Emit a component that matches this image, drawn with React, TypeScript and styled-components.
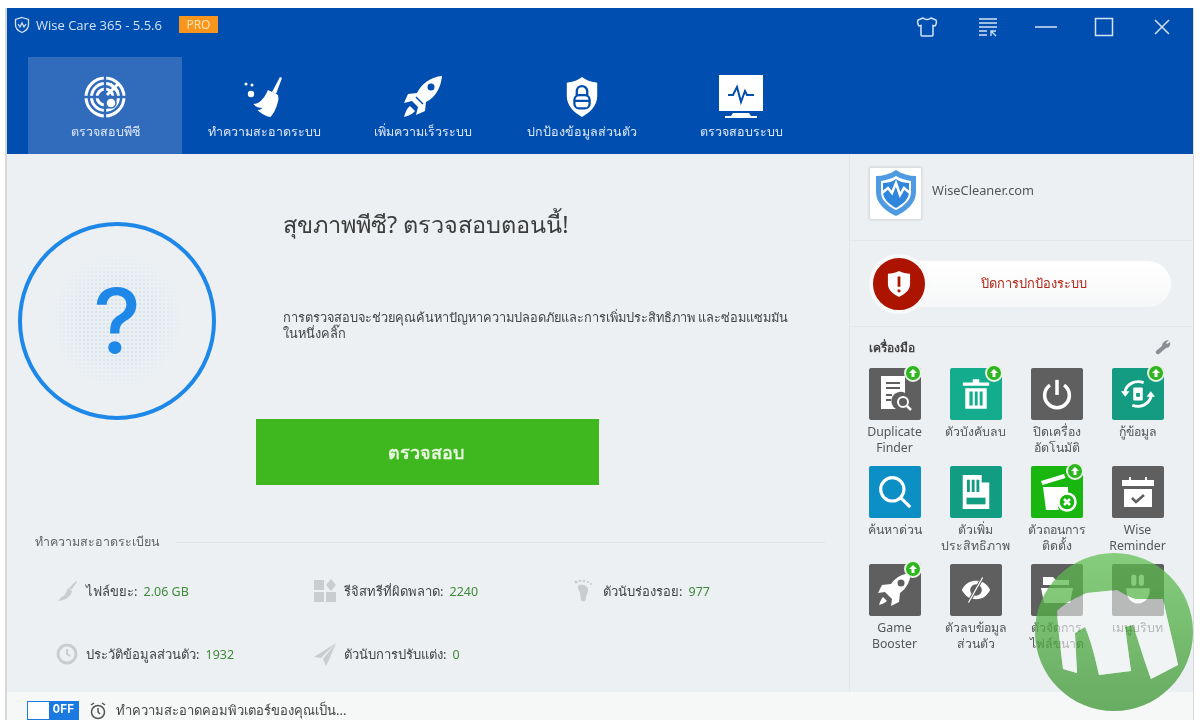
import React from 'react';
import styled, { createGlobalStyle } from 'styled-components';

const GlobalStyle = createGlobalStyle`
  html, body {
    margin: 0;
    padding: 0;
    height: 720px;
    overflow: hidden;
    background: #fff;
    font-family: 'Noto Sans', 'Liberation Sans', 'DejaVu Sans', sans-serif;
  }
  * { box-sizing: border-box; }
`;

const S = {
  Window: styled.div`
    position: relative;
    margin: 8px 6px 0 5px;
    height: 712px;
    display: flex;
    flex-direction: column;
    overflow: hidden;
    border-left: 2px solid #d6d8da;
    border-right: 1px solid #d6d8da;
    filter: blur(0.5px);
  `,
  Header: styled.header`
    height: 146px;
    flex: none;
    background: #004eb0;
    display: flex;
    flex-direction: column;
  `,
  TitleBar: styled.div`
    height: 49px;
    flex: none;
    display: flex;
    align-items: flex-start;
    padding: 8px 16px 0 6px;
  `,
  AppIcon: styled.span`
    display: flex;
    color: #d5e3f5;
  `,
  TitleText: styled.span`
    margin-left: 5px;
    font-size: 13px;
    line-height: 19px;
    color: #d5e3f5;
    font-family: 'Open Sans', 'Noto Sans', sans-serif;
  `,
  Pro: styled.span`
    margin-left: 17px;
    width: 39px;
    height: 17px;
    background: #f7951d;
    color: #ffe2b0;
    font-size: 12px;
    line-height: 17px;
    text-align: center;
  `,
  WindowButtons: styled.div`
    margin-left: auto;
    display: flex;
    gap: 28px;
  `,
  WindowButton: styled.span`
    width: 30px;
    height: 22px;
    display: flex;
    align-items: center;
    justify-content: center;
    color: #d5e3f5;
  `,
  Nav: styled.nav`
    display: flex;
    gap: 5px;
    padding-left: 21px;
    flex: 1;
  `,
  Tab: styled.div<{ $active?: boolean }>`
    width: 154px;
    display: flex;
    flex-direction: column;
    align-items: center;
    padding-top: 18px;
    background: ${p => (p.$active ? '#316cbc' : 'transparent')};
  `,
  TabIcon: styled.div`
    height: 44px;
    display: flex;
    align-items: center;
    justify-content: center;
    color: #fff;
  `,
  TabLabel: styled.span`
    margin-top: 5px;
    font-size: 12.5px;
    line-height: 16px;
    color: #dce6f5;
    white-space: nowrap;
  `,
  Body: styled.div`
    height: 538px;
    flex: none;
    display: flex;
    background: #ecf0f3;
  `,
  Main: styled.main`
    width: 842px;
    flex: none;
    padding: 54px 0 0 11px;
  `,
  Hero: styled.section`
    display: flex;
    align-items: flex-start;
  `,
  Gauge: styled.div`
    position: relative;
    width: 198px;
    height: 198px;
    margin-top: 14px;
    flex: none;
    border: 4px solid #1e88e8;
    border-radius: 50%;
    display: flex;
    align-items: center;
    justify-content: center;
    &::before {
      content: '';
      position: absolute;
      inset: 28px;
      border-radius: 50%;
      background-image: radial-gradient(circle, #d5e2f1 1.2px, transparent 1.6px);
      background-size: 4px 4px;
      -webkit-mask-image: radial-gradient(circle, #000 35%, transparent 70%);
      mask-image: radial-gradient(circle, #000 35%, transparent 70%);
    }
  `,
  QuestionMark: styled.span`
    position: relative;
    font-family: 'Inter', 'Liberation Sans', sans-serif;
    font-weight: 500;
    font-size: 90px;
    line-height: 90px;
    color: #1e88e8;
  `,
  HeroText: styled.div`
    margin-left: 40px;
    display: flex;
    flex-direction: column;
  `,
  Heading: styled.h1`
    margin: 0 0 0 27px;
    height: 32px;
    font-size: 23.5px;
    line-height: 32px;
    font-weight: 400;
    color: #3c3c3c;
    white-space: nowrap;
  `,
  Description: styled.p`
    margin: 69px 0 0 27px;
    font-size: 12.8px;
    line-height: 16px;
    color: #444;
    white-space: nowrap;
  `,
  ScanButton: styled.button`
    margin-top: 78px;
    width: 343px;
    height: 66px;
    border: 0;
    padding: 0 4px 0 0;
    background: #3fb71e;
    color: #e8f7df;
    font-family: inherit;
    font-size: 18px;
    font-weight: 700;
  `,
  SectionHead: styled.div`
    margin: 49px 24px 0 17px;
    display: flex;
    align-items: center;
    gap: 16px;
    font-size: 12.5px;
    line-height: 16px;
    color: #666;
    &::after {
      content: '';
      flex: 1;
      height: 1px;
      background: #e0e4e8;
    }
  `,
  Stats: styled.div`
    margin: 29px 0 0 35px;
    display: grid;
    grid-template-columns: 258px 259px 200px;
    row-gap: 39px;
  `,
  Stat: styled.div`
    height: 24px;
    display: flex;
    align-items: center;
    gap: 6px;
    font-size: 13px;
    color: #444;
    white-space: nowrap;
  `,
  StatIcon: styled.span`
    width: 27px;
    height: 24px;
    display: flex;
    align-items: center;
    justify-content: center;
    color: #c9cdd0;
  `,
  StatValue: styled.span`
    font-size: 12.5px;
    color: #3f8a3a;
  `,
  Side: styled.aside`
    flex: 1;
    border-left: 1px solid #e3e6e9;
    display: flex;
    flex-direction: column;
  `,
  LogoRow: styled.div`
    height: 87px;
    flex: none;
    display: flex;
    align-items: center;
    gap: 10px;
    padding: 0 0 8px 19px;
    border-bottom: 1px solid #e5e8eb;
    font-size: 12.8px;
    color: #555;
  `,
  LogoText: styled.span`
    margin-bottom: 6px;
  `,
  LogoBox: styled.div`
    width: 53px;
    height: 53px;
    background: #fff;
    border: 1px solid #dcdfe2;
    border-radius: 2px;
    box-shadow: 0 0 2px rgba(0, 0, 0, 0.2);
    display: flex;
    align-items: center;
    justify-content: center;
  `,
  ProtectRow: styled.div`
    height: 86px;
    flex: none;
    display: flex;
    align-items: center;
    padding: 0 22px;
    border-bottom: 1px solid #e5e8eb;
  `,
  ProtectPill: styled.div`
    position: relative;
    flex: 1;
    height: 46px;
    padding-left: 24px;
    border-radius: 23px;
    background: linear-gradient(#fff, #f6f7f8);
    display: flex;
    align-items: center;
    justify-content: center;
    font-size: 12.8px;
    color: #b3261a;
  `,
  ProtectBadge: styled.span`
    position: absolute;
    left: -3px;
    top: -7px;
    width: 60px;
    height: 60px;
    border-radius: 50%;
    border: 4px solid #f8f9fa;
    background: #ad1400;
    display: flex;
    align-items: center;
    justify-content: center;
  `,
  ToolHead: styled.div`
    height: 41px;
    flex: none;
    padding: 12px 22px 0 19px;
    display: flex;
    align-items: flex-start;
    justify-content: space-between;
    font-size: 12px;
    font-weight: 700;
    line-height: 18px;
    color: #444;
  `,
  ToolGrid: styled.div`
    display: grid;
    grid-template-columns: repeat(4, 81px);
    grid-auto-rows: 98px;
    padding-left: 4px;
  `,
  Tool: styled.div`
    display: flex;
    flex-direction: column;
    align-items: center;
  `,
  ToolTile: styled.div<{ $color: string }>`
    position: relative;
    width: 52px;
    height: 52px;
    flex: none;
    border-radius: 2px;
    background: ${p => p.$color};
    display: flex;
    align-items: center;
    justify-content: center;
  `,
  UpBadge: styled.span`
    position: absolute;
    top: -4px;
    right: -1px;
    width: 18px;
    height: 18px;
    border-radius: 50%;
    border: 2px solid #e8f3e6;
    background: #2fb520;
    display: flex;
    align-items: center;
    justify-content: center;
  `,
  ToolLabel: styled.span`
    margin-top: 4px;
    font-size: 12.3px;
    line-height: 16px;
    text-align: center;
    color: #555;
    white-space: pre-line;
  `,
  Footer: styled.footer`
    height: 28px;
    flex: none;
    background: #f6f7f7;
    display: flex;
    align-items: flex-start;
    padding: 9px 0 0 20px;
    font-size: 13px;
    line-height: 19px;
    color: #444;
  `,
  Toggle: styled.div`
    width: 52px;
    height: 19px;
    display: flex;
    border: 1px solid #1a7ae0;
    background: #fff;
  `,
  ToggleOff: styled.span`
    margin-left: auto;
    width: 29px;
    background: #1a7ae0;
    color: #fff;
    font-family: 'Liberation Mono', monospace;
    font-size: 12px;
    font-weight: 700;
    line-height: 17px;
    text-align: center;
  `,
  Alarm: styled.span`
    margin: 0 7px 0 8px;
    width: 22px;
    display: flex;
    justify-content: center;
    color: #555;
  `,
  Watermark: styled.svg`
    position: absolute;
    left: 1028px;
    top: 545px;
    width: 158px;
    height: 158px;
    pointer-events: none;
  `,
};

const Line = { stroke: 'currentColor', fill: 'none' } as const;
const Blue = '#004eb0';

// the slanted M cut out of the watermark disc
const markShape = 'M22 58C30 50 42 44 52 40L82 37C88 40 94 44 100 46L128 46C133 70 140 96 143 112L116 126C110 110 104 90 98 72L90 74 96 118 64 122C60 104 56 88 50 74L40 80 42 120 28 116C26 98 23 76 22 58Z';

const Shield = () => (
  <svg width="18" height="18" viewBox="0 0 18 18" {...Line} strokeWidth="1.3">
    <path d="M9 1.500 15.500 3.500V9c0 3.600-3 6-6.500 7.500C5.500 15 2.500 12.600 2.500 9V3.500Z" />
    <path d="M5 8l2 3 2-4 2 4 2-3" />
  </svg>
);

const Radar = () => (
  <svg width="44" height="44" viewBox="0 0 44 44">
    <circle cx="22" cy="22" r="19" fill="none" stroke="#fff" strokeWidth="3" />
    <circle cx="22" cy="22" r="13.500" fill="none" stroke="#fff" strokeWidth="3" />
    <circle cx="22" cy="22" r="8" fill="none" stroke="#fff" strokeWidth="3" />
    <path d="M22 1v42M1 22h42" stroke="#316cbc" strokeWidth="2.400" />
    <path d="M24 20 36 8M27 9l8 8" stroke="#fff" strokeWidth="3" />
    <circle cx="28" cy="28" r="5" fill="#fff" stroke="#316cbc" strokeWidth="1.500" />
  </svg>
);

const Broom = () => (
  <svg width="44" height="44" viewBox="0 0 44 44" fill="#fff">
    <path d="M38 2l2 1-6 16-4-2Z" />
    <path d="M26 15l10 5 .5 4c-1 6-4 14-8 18-3 0-9-3-13-7 3 0 5-2 5-2-3 0-7-1-9-4 5 0 10-4 14.500-14Z" />
    <circle cx="4" cy="9" r="1.500" />
    <circle cx="10" cy="10" r="1.500" />
    <circle cx="9" cy="19" r="3.200" />
  </svg>
);

const Rocket = () => (
  <svg width="44" height="44" viewBox="0 0 44 44" fill="#fff">
    <path d="M41 1C30 2 21 8 16 18l-9 1-4 9 8-2 6 6-2 8 9-4 1-9c10-5 15-15 16-26Z" />
    <circle cx="30" cy="12" r="3.500" fill={Blue} />
    <path d="M9 31c-3 2-5 7-6 11 4-1 9-3 11-6Z" />
    <path d="M15 22l7 7" stroke={Blue} strokeWidth="1.500" />
  </svg>
);

const Lock = () => (
  <svg width="38" height="42" viewBox="0 0 40 44">
    <path d="M20 1c5 4 10 5 16 6v14c0 10-7 17-16 22C11 38 4 31 4 21V7c6-1 11-2 16-6Z" fill="#fff" />
    <rect x="12" y="20" width="16" height="14" rx="5" fill="none" stroke={Blue} strokeWidth="2.400" />
    <path d="M14.500 20v-4a5.500 5.500 0 0 1 11 0v4M12 26h16" fill="none" stroke={Blue} strokeWidth="2.400" />
  </svg>
);

const Monitor = () => (
  <svg width="46" height="44" viewBox="0 0 46 44">
    <rect x="1" y="0" width="44" height="36" fill="#fff" />
    <path d="M10 20h5l4-8 4 15 4-11 2 4h7" fill="none" stroke={Blue} strokeWidth="2" />
    <path d="M15 38h16l2 3H39v2H7v-2h6Z" fill="#fff" />
  </svg>
);

const Shirt = () => (
  <svg width="22" height="22" viewBox="0 0 22 22" {...Line} strokeWidth="1.500" transform="translate(-3 0)">
    <path d="M7 2c2 2 6 2 8 0l5 2c1 2 0 5-1 6l-2-.5V19c0 1-1 1-1 1H6s-1 0-1-1V9.500L3 10C2 9 1 6 2 4Z" />
  </svg>
);

const ListBack = () => (
  <svg width="20" height="20" viewBox="0 0 20 20" {...Line} strokeWidth="1.500">
    <path d="M1 2h18M1 6h18M1 10h18M1 14h8M1 18h8" />
    <path d="M13 19v-5h5M13 14l5 5" strokeWidth="1.300" />
  </svg>
);

const Minimize = () => (
  <svg width="22" height="22" viewBox="0 0 22 22" {...Line} strokeWidth="1.500">
    <path d="M0 11h22" />
  </svg>
);

const Maximize = () => (
  <svg width="20" height="20" viewBox="0 0 20 20" {...Line} strokeWidth="1.500">
    <rect x="1.500" y="1.500" width="17" height="17" />
  </svg>
);

const Close = () => (
  <svg width="18" height="18" viewBox="0 0 18 18" {...Line} strokeWidth="1.500">
    <path d="M2 2l14 14M16 2 2 16" />
  </svg>
);

const Arrow = () => (
  <svg width="10" height="10" viewBox="0 0 10 10" fill="#fff">
    <path d="M5 1 9 5H6.500v4h-3V5H1Z" />
  </svg>
);

const tiles: Record<string, React.ReactNode> = {
  duplicate: (
    <svg width="52" height="52" viewBox="0 0 52 52">
      <path d="M12 8h24v17a9 9 0 0 0-9 16H12Z" fill="#fff" />
      <path d="M17 15h14M17 20h14M17 27h6M17 32h5" stroke="#5f5f5f" strokeWidth="2" />
      <circle cx="34" cy="34" r="5" fill="none" stroke="#fff" strokeWidth="2" />
      <path d="M38 38l4 4" stroke="#fff" strokeWidth="2.500" />
    </svg>
  ),
  trash: (
    <svg width="28" height="32" viewBox="0 0 34 38" fill="#fff">
      <path d="M13 1h8v4h12v4H1V5h12Z" />
      <path d="M4 12h26v25H4Zm5 4v17h4V16Zm6.500 0v17h3.500V16Zm6 0v17h3.500V16Z" fillRule="evenodd" />
    </svg>
  ),
  power: (
    <svg width="30" height="32" viewBox="0 0 34 36" fill="none" stroke="#fff" strokeWidth="4">
      <path d="M17 2v17" />
      <path d="M9 8a14 14 0 1 0 16 0" />
    </svg>
  ),
  recover: (
    <svg width="36" height="34" viewBox="0 0 38 36" fill="none" stroke="#fff" strokeWidth="3">
      <path d="M5 16C7 7 16 3 25 6M33 20c-2 9-11 13-20 10" />
      <path d="M1 15h9l-4.500 6ZM37 21h-9l4.500-6Z" fill="#fff" stroke="none" />
      <rect x="14" y="11" width="10" height="14" rx="1" fill="#fff" stroke="none" />
      <rect x="17" y="17" width="4" height="4" fill="#139c82" stroke="none" />
    </svg>
  ),
  search: (
    <svg width="34" height="34" viewBox="0 0 38 38" fill="none" stroke="#fff">
      <circle cx="16" cy="16" r="13" strokeWidth="3.500" />
      <path d="M25 25l11 11" strokeWidth="3.500" />
    </svg>
  ),
  card: (
    <svg width="30" height="36" viewBox="0 0 30 38">
      <path d="M1 1h20v8l8 0v28H1Z" fill="#fff" />
      <path d="M7 6v13M12 6v13M17 6v13" stroke="#129c82" strokeWidth="3" />
      <rect x="5" y="25" width="20" height="7" fill="#129c82" />
    </svg>
  ),
  uninstall: (
    <svg width="42" height="42" viewBox="0 0 42 42">
      <path d="M5 10 28 3l1.500 4-23 7Z" fill="#fff" />
      <path d="M7 16h25v7a11 11 0 0 0-9 16H10Z" fill="#fff" />
      <circle cx="31" cy="31" r="8.500" fill="none" stroke="#fff" strokeWidth="2.500" />
      <path d="M28 28l6 6m0-6-6 6" stroke="#fff" strokeWidth="2.500" />
    </svg>
  ),
  reminder: (
    <svg width="34" height="34" viewBox="0 0 34 34">
      <path d="M1 5h7V2h2v3h14V2h2v3h7v6H1Z" fill="#fff" />
      <path d="M3 14h28v18H3Z" fill="#fff" />
      <path d="M11 23l4 4 8-7" fill="none" stroke="#5f5f5f" strokeWidth="2.500" />
    </svg>
  ),
  game: (
    <svg width="38" height="38" viewBox="0 0 38 38" fill="#fff">
      <path d="M35 2c-9 1-15 4-20 11l-9 1-4 8 7-1 7 7-1 7 8-4 1-9c7-5 10-12 11-20Z" />
      <circle cx="25" cy="12" r="3.500" fill="#5f5f5f" />
      <path d="M7 26c-2 2-3 5-4 8 3-1 6-2 8-4Z" />
    </svg>
  ),
  eye: (
    <svg width="30" height="30" viewBox="0 0 36 36" fill="#fff">
      <path d="M1 18C6 9 12 7 18 7s12 2 17 11c-5 9-11 11-17 11S6 27 1 18Zm17-7a7 7 0 1 0 0 14 7 7 0 0 0 0-14Z" fillRule="evenodd" />
      <path d="M26 3 9 33" stroke="#5f5f5f" strokeWidth="4" />
      <path d="M26 3 9 33" stroke="#fff" strokeWidth="1.500" />
    </svg>
  ),
  folder: (
    <svg width="34" height="30" viewBox="0 0 34 30" fill="#fff">
      <path d="M3 2h10l3 3h13v5H3Z" />
      <path d="M1 13h32l-3 15H4Z" />
    </svg>
  ),
  mouse: (
    <svg width="26" height="32" viewBox="0 0 30 38" fill="#fff">
      <rect x="7" y="1" width="6" height="13" rx="2" />
      <rect x="16" y="1" width="6" height="13" rx="2" />
      <path d="M1 17h28c0 11-5 18-14 18S1 28 1 17Z" />
    </svg>
  ),
};

const nav = [
  { label: 'ตรวจสอบพีซี', icon: <Radar />, active: true },
  { label: 'ทำความสะอาดระบบ', icon: <Broom /> },
  { label: 'เพิ่มความเร็วระบบ', icon: <Rocket /> },
  { label: 'ปกป้องข้อมูลส่วนตัว', icon: <Lock /> },
  { label: 'ตรวจสอบระบบ', icon: <Monitor /> },
];

const stats = [
  {
    label: 'ไฟล์ขยะ:',
    value: '2.06 GB',
    icon: (
      <svg width="24" height="24" viewBox="0 0 24 24" fill="currentColor">
        <path d="M21 2l1 1-6 8-2-2ZM13 9l4 3c-1 5-5 9-14 10 1-1 3-3 3-4 3 0 5-4 7-9Z" />
      </svg>
    ),
  },
  {
    label: 'รีจิสทรีที่ผิดพลาด:',
    value: '2240',
    icon: (
      <svg width="24" height="24" viewBox="0 0 24 24" fill="currentColor">
        <path d="M1 1h10v10H1ZM1 13h10v10H1ZM13 13h10v10H13ZM18 0l5 6-5 6-5-6Z" />
      </svg>
    ),
  },
  {
    label: 'ตัวนับร่องรอย:',
    value: '977',
    icon: (
      <svg width="24" height="24" viewBox="0 0 24 24" fill="currentColor">
        <path d="M7 6c5-1 9 1 9 5s-2 5-2 8-2 4-4 3c-2-1-1-5-2-8S4 7 7 6Z" />
        <circle cx="4" cy="3" r="1.600" />
        <circle cx="8" cy="2" r="1.300" />
        <circle cx="12" cy="2" r="1.200" />
        <circle cx="16" cy="3" r="1.100" />
        <circle cx="19" cy="5" r="1" />
      </svg>
    ),
  },
  {
    label: 'ประวัติข้อมูลส่วนตัว:',
    value: '1932',
    icon: (
      <svg width="24" height="24" viewBox="0 0 24 24" fill="none" stroke="currentColor">
        <circle cx="12" cy="12" r="9" strokeWidth="3" />
        <path d="M12 7v5l3 2" strokeWidth="2" />
      </svg>
    ),
  },
  {
    label: 'ตัวนับการปรับแต่ง:',
    value: '0',
    icon: (
      <svg width="24" height="24" viewBox="0 0 24 24" fill="currentColor">
        <path d="M23 1 1 15l7 1ZM23 1 10 17l3 7 3-6Z" />
      </svg>
    ),
  },
];

const tools = [
  { label: 'Duplicate\nFinder', icon: 'duplicate', color: '#5f5f5f', up: true },
  { label: 'ตัวบังคับลบ', icon: 'trash', color: '#13ac8c', up: true },
  { label: 'ปิดเครื่อง\nอัตโนมัติ', icon: 'power', color: '#5f5f5f' },
  { label: 'กู้ข้อมูล', icon: 'recover', color: '#139c82', up: true },
  { label: 'ค้นหาด่วน', icon: 'search', color: '#0b8fc4' },
  { label: 'ตัวเพิ่ม\nประสิทธิภาพ', icon: 'card', color: '#129c82' },
  { label: 'ตัวถอนการ\nติดตั้ง', icon: 'uninstall', color: '#18b60e', up: true },
  { label: 'Wise\nReminder', icon: 'reminder', color: '#5f5f5f' },
  { label: 'Game\nBooster', icon: 'game', color: '#5f5f5f', up: true },
  { label: 'ตัวลบข้อมูล\nส่วนตัว', icon: 'eye', color: '#5f5f5f' },
  { label: 'ตัวจัดการ\nไฟล์ขนาด', icon: 'folder', color: '#5f5f5f' },
  { label: 'เมนูบริบท', icon: 'mouse', color: '#5f5f5f' },
];

export default function App() {
  return (
    <>
      <GlobalStyle />
      <S.Window>
        <S.Header>
          <S.TitleBar>
            <S.AppIcon>
              <Shield />
            </S.AppIcon>
            <S.TitleText>Wise Care 365 - 5.5.6</S.TitleText>
            <S.Pro>PRO</S.Pro>
            <S.WindowButtons>
              <S.WindowButton><Shirt /></S.WindowButton>
              <S.WindowButton><ListBack /></S.WindowButton>
              <S.WindowButton><Minimize /></S.WindowButton>
              <S.WindowButton><Maximize /></S.WindowButton>
              <S.WindowButton><Close /></S.WindowButton>
            </S.WindowButtons>
          </S.TitleBar>
          <S.Nav>
            {nav.map(item => (
              <S.Tab key={item.label} $active={item.active}>
                <S.TabIcon>{item.icon}</S.TabIcon>
                <S.TabLabel>{item.label}</S.TabLabel>
              </S.Tab>
            ))}
          </S.Nav>
        </S.Header>
        <S.Body>
          <S.Main>
            <S.Hero>
              <S.Gauge>
                <S.QuestionMark>?</S.QuestionMark>
              </S.Gauge>
              <S.HeroText>
                <S.Heading>สุขภาพพีซี? ตรวจสอบตอนนี้!</S.Heading>
                <S.Description>
                  การตรวจสอบจะช่วยคุณค้นหาปัญหาความปลอดภัยและการเพิ่มประสิทธิภาพ และซ่อมแซมมัน
                  <br />
                  ในหนึ่งคลิ๊ก
                </S.Description>
                <S.ScanButton>ตรวจสอบ</S.ScanButton>
              </S.HeroText>
            </S.Hero>
            <S.SectionHead>ทำความสะอาดระเบียน</S.SectionHead>
            <S.Stats>
              {stats.map(stat => (
                <S.Stat key={stat.label}>
                  <S.StatIcon>{stat.icon}</S.StatIcon>
                  {stat.label} <S.StatValue>{stat.value}</S.StatValue>
                </S.Stat>
              ))}
            </S.Stats>
          </S.Main>
          <S.Side>
            <S.LogoRow>
              <S.LogoBox>
                <svg width="44" height="48" viewBox="0 0 44 48">
                  <path d="M22 1c6 4 13 6 20 6v16c0 11-9 19-20 24C11 42 2 34 2 23V7c7 0 14-2 20-6Z" fill="#4f9ae0" />
                  <path d="M22 7c5 3 10 4 15 5v11c0 8-7 14-15 18C14 37 7 31 7 23V12c5-1 10-2 15-5Z" fill="#fff" />
                  <path d="M22 10c4 3 9 4 13 4v9c0 7-6 12-13 16C15 35 9 30 9 23v-9c4 0 9-1 13-4Z" fill="#2f86dc" />
                  <path d="M8 24l6-5 4 5 4-10 4 12 4-7 6 5" fill="none" stroke="#fff" strokeWidth="2.500" />
                </svg>
              </S.LogoBox>
              <S.LogoText>WiseCleaner.com</S.LogoText>
            </S.LogoRow>
            <S.ProtectRow>
              <S.ProtectPill>
                <S.ProtectBadge>
                  <svg width="24" height="28" viewBox="0 0 26 30">
                    <path d="M13 1c4 2 8 3 12 3v11c0 7-6 11-12 14C7 26 1 22 1 15V4c4 0 8-1 12-3Z" fill="#fff" />
                    <path d="M13 7v11M13 21v3" stroke="#ad1400" strokeWidth="3" />
                  </svg>
                </S.ProtectBadge>
                ปิดการปกป้องระบบ
              </S.ProtectPill>
            </S.ProtectRow>
            <S.ToolHead>
              เครื่องมือ
              <svg width="16" height="16" viewBox="0 0 16 16" fill="#8b8f93">
                <path d="M14 1l-3 3 1 1 3-2c1 3-1 6-4 6L4 15c-2 1-4-1-3-3l6-5c0-3 3-6 7-6Z" />
              </svg>
            </S.ToolHead>
            <S.ToolGrid>
              {tools.map(tool => (
                <S.Tool key={tool.label}>
                  <S.ToolTile $color={tool.color}>
                    {tiles[tool.icon]}
                    {tool.up && (
                      <S.UpBadge>
                        <Arrow />
                      </S.UpBadge>
                    )}
                  </S.ToolTile>
                  <S.ToolLabel>{tool.label}</S.ToolLabel>
                </S.Tool>
              ))}
            </S.ToolGrid>
          </S.Side>
        </S.Body>
        <S.Footer>
          <S.Toggle>
            <S.ToggleOff>OFF</S.ToggleOff>
          </S.Toggle>
          <S.Alarm>
            <svg width="18" height="19" viewBox="0 0 18 19" fill="none" stroke="currentColor" strokeWidth="1.500">
              <circle cx="9" cy="11" r="6.500" />
              <path d="M9 7v4l2 2M2 4l3-2M16 4l-3-2" />
            </svg>
          </S.Alarm>
          ทำความสะอาดคอมพิวเตอร์ของคุณเป็น...
        </S.Footer>
        <S.Watermark viewBox="0 0 158 158">
          <defs>
            <linearGradient id="markFill" x1="0" y1="0" x2="0" y2="1">
              <stop offset="0" stopColor="#5fbf4f" stopOpacity="0.72" />
              <stop offset="1" stopColor="#45993c" stopOpacity="0.8" />
            </linearGradient>
            <mask id="markHole">
              <rect width="158" height="158" fill="#fff" />
              <path d={markShape} fill="#000" />
            </mask>
            <clipPath id="markDisc">
              <circle cx="79" cy="79" r="79" />
            </clipPath>
          </defs>
          <circle cx="79" cy="79" r="79" fill="url(#markFill)" mask="url(#markHole)" />
          <path d={markShape} fill="#f4f6f7" opacity="0.6" clipPath="url(#markDisc)" />
        </S.Watermark>
      </S.Window>
    </>
  );
}
